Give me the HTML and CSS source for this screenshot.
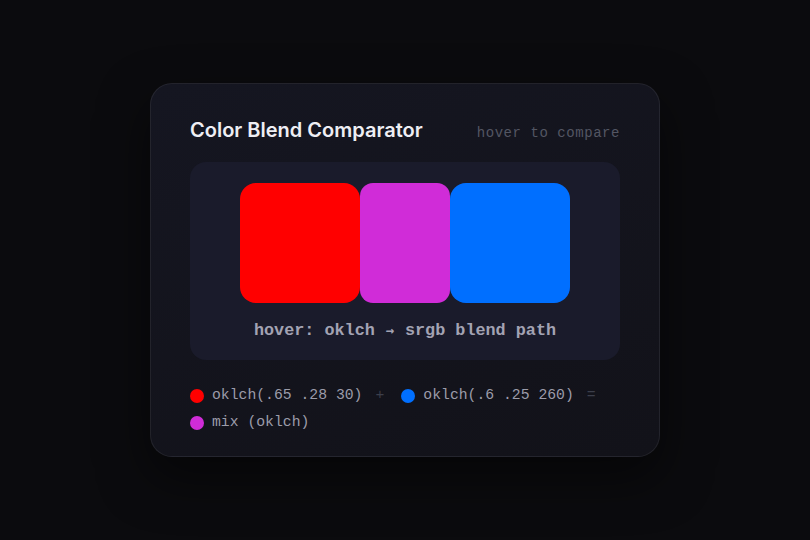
FILE: index.html
```html
<!DOCTYPE html>
<html lang="en">
<head>
<meta charset="utf-8">
<title>Color Blend Comparator</title>
<link rel="stylesheet" href="styles.css">
</head>
<body>
  <main class="card">
    <header class="card-head">
      <h1 class="title">Color Blend Comparator</h1>
      <span class="hint">hover to compare</span>
    </header>

    <section class="stage">
      <div class="swatches">
        <div class="swatch swatch-a"></div>
        <div class="swatch swatch-mix"></div>
        <div class="swatch swatch-b"></div>
      </div>
      <p class="caption">hover: oklch <span class="arrow">→</span> srgb blend path</p>
    </section>

    <ul class="legend">
      <li class="legend-item"><span class="dot dot-a"></span>oklch(.65 .28 30)</li>
      <li class="op">+</li>
      <li class="legend-item"><span class="dot dot-b"></span>oklch(.6 .25 260)</li>
      <li class="op">=</li>
      <li class="legend-item"><span class="dot dot-mix"></span>mix (oklch)</li>
    </ul>
  </main>
</body>
</html>
```

FILE: styles.css
```css
* {
  box-sizing: border-box;
}

html,
body {
  margin: 0;
  height: 100%;
}

body {
  background: #0b0b0e;
  display: flex;
  align-items: center;
  justify-content: center;
  font-family: "Inter", "Liberation Sans", sans-serif;
}

.card {
  width: 510px;
  padding: 34px 39px 24px;
  background: linear-gradient(160deg, #151621 0%, #121219 100%);
  border: 1px solid rgba(255, 255, 255, 0.07);
  border-radius: 22px;
  box-shadow: 0 20px 50px rgba(0, 0, 0, 0.5);
}

.card-head {
  display: flex;
  align-items: baseline;
  justify-content: space-between;
  height: 24px;
}

.title {
  margin: 0;
  font-size: 20px;
  font-weight: 600;
  line-height: 24px;
  color: #eeeef4;
  letter-spacing: 0;
}

.hint {
  font-family: "Liberation Mono", monospace;
  font-size: 14px;
  letter-spacing: 0.55px;
  color: #535663;
}

.stage {
  margin-top: 20px;
  padding: 21px 20px 20px;
  background: #1a1b2b;
  border-radius: 16px;
  display: flex;
  flex-direction: column;
  align-items: center;
}

.swatches {
  display: flex;
}

.swatch {
  height: 120px;
}

.swatch-a {
  width: 120px;
  background: #ff0000;
  border-radius: 16px;
}

.swatch-mix {
  width: 90px;
  background: #d02cd8;
  border-radius: 13px;
}

.swatch-b {
  width: 120px;
  background: #006fff;
  border-radius: 16px;
}

.caption {
  margin: 18px 0 0;
  font-family: "Liberation Mono", monospace;
  font-size: 16.8px;
  line-height: 19px;
  font-weight: 700;
  color: #a3a3b3;
}

.arrow {
  font-family: "DejaVu Sans Mono", monospace;
  font-size: 14px;
  display: inline-block;
  width: 10px;
  text-align: center;
}

.legend {
  list-style: none;
  margin: 26px 0 0;
  padding: 0;
  display: flex;
  flex-wrap: wrap;
  align-items: center;
  column-gap: 13px;
  row-gap: 8px;
  font-family: "Liberation Mono", monospace;
  font-size: 14.75px;
  line-height: 19px;
  color: #9c9caa;
}

.legend-item {
  display: flex;
  align-items: center;
  gap: 8px;
}

.op {
  color: #3c3f4b;
  margin-right: 4px;
}

.dot {
  width: 14px;
  height: 14px;
  border-radius: 50%;
  flex: none;
}

.dot-a {
  background: #ff0000;
}

.dot-b {
  background: #006fff;
}

.dot-mix {
  background: #d02cd8;
}
```
